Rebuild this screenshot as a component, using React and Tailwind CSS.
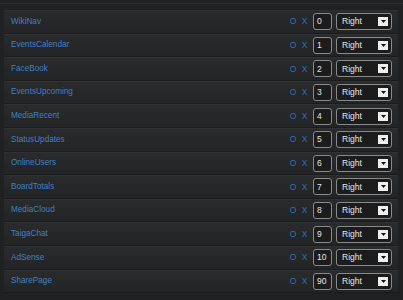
import React from "react";

const widgets = [
  { name: "WikiNav", order: "0" },
  { name: "EventsCalendar", order: "1" },
  { name: "FaceBook", order: "2" },
  { name: "EventsUpcoming", order: "3" },
  { name: "MediaRecent", order: "4" },
  { name: "StatusUpdates", order: "5" },
  { name: "OnlineUsers", order: "6" },
  { name: "BoardTotals", order: "7" },
  { name: "MediaCloud", order: "8" },
  { name: "TaigaChat", order: "9" },
  { name: "AdSense", order: "10" },
  { name: "SharePage", order: "90" },
];

const WidgetRow = ({ name, order }) => {
  return (
    <li className="flex h-[23.6px] items-center border-t border-t-[#303133] border-b border-b-[#1b1c1d] bg-gradient-to-b from-[#2a2b2d] to-[#232426] pl-[7px] pr-[6px]">
      <span className="flex-1 text-[8.2px] text-[#3f80c8]">{name}</span>
      <span className="mr-[4px] text-[8.5px] tracking-[1.5px] text-[#3070b8]">O X</span>
      <div className="mr-[4px] flex h-[17px] w-[19px] items-center rounded-[3px] border border-[#8a8a8a] bg-[#1c1c1d] pl-[3px] text-[8.5px] text-[#e6e6e6]">
        {order}
      </div>
      <div className="flex h-[17px] w-[56px] items-center justify-between rounded-[3px] border border-[#8a8a8a] bg-[#1c1c1d] pl-[5px] pr-[3px] text-[8.5px] text-[#e6e6e6]">
        <span>Right</span>
        <span className="flex h-[9px] w-[10px] items-center justify-center bg-[#efefef]">
          <svg width="5" height="3" viewBox="0 0 5 3">
            <path d="M0 0 L5 0 L2.5 3 Z" fill="#111" />
          </svg>
        </span>
      </div>
    </li>
  );
};

const App = () => {
  return (
    <div
      className="h-[300px] w-[403px] overflow-hidden bg-[#202122] pt-[3px]"
      style={{ fontFamily: "'Liberation Sans', Arial, sans-serif" }}
    >
      <div className="h-[1px] bg-[#2e2f31]" />
      <ul className="ml-[4px] mr-[5px] mt-[6px] bg-[#252628]">
        {widgets.map((item, index) => (
          <WidgetRow key={index} name={item.name} order={item.order} />
        ))}
      </ul>
    </div>
  );
};

export default App;
